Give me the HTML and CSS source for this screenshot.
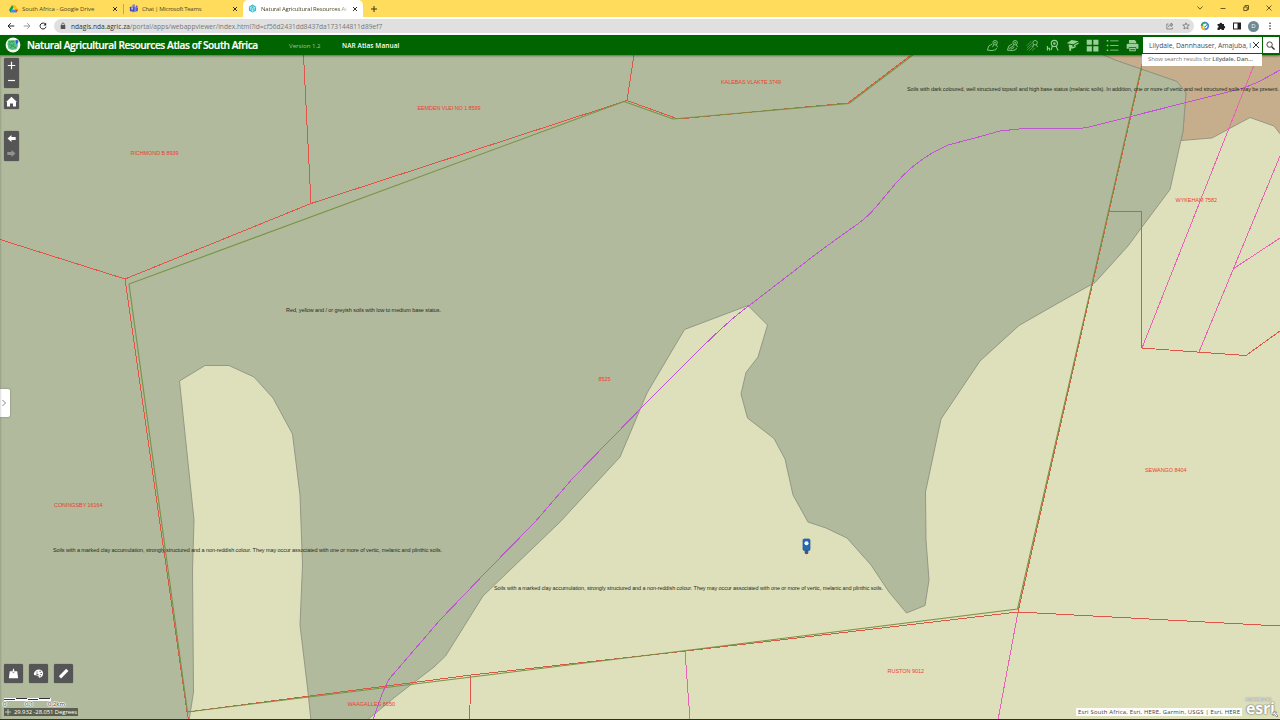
FILE: index.html
```html
<!DOCTYPE html>
<html lang="en">
<head>
<meta charset="utf-8">
<title>Natural Agricultural Resources Atlas of South Africa</title>
<link rel="stylesheet" href="styles.css">
</head>
<body>
<div class="window">
  <div class="tabs">
    <div class="tab drive">
      <svg class="fav" viewBox="0 0 10 10"><path d="M3.4 1H6.6L10 6.5H6.8z" fill="#fbbc05"/><path d="M3.4 1L0 6.8 1.7 9.5 5 4z" fill="#0f9d58"/><path d="M3.3 6.5H10L8.4 9.5H1.7z" fill="#4285f4"/><path d="M7 6.5H10L8.4 9.5z" fill="#ea4335"/></svg>
      <span class="tab-title">South Africa - Google Drive</span>
      <svg class="x" viewBox="0 0 6 6"><path d="M1 1L5 5M5 1L1 5"/></svg>
    </div>
    <div class="tab teams">
      <svg class="fav" viewBox="0 0 10 10"><circle cx="5.2" cy="2" r="1.6" fill="#7b83eb"/><circle cx="8.5" cy="2.8" r="1.1" fill="#5059c9"/><path d="M6 4h4v3q-1 2-3 1z" fill="#5059c9"/><path d="M3 4h5v3.500q-2 3-5 1z" fill="#7b83eb"/><rect x="1" y="3" width="5" height="5" rx=".6" fill="#4349a8"/><path d="M2.300 4.400h2.400M3.500 4.400v2.500" stroke="#fff" stroke-width=".8"/></svg>
      <span class="tab-title">Chat | Microsoft Teams</span>
      <svg class="x" viewBox="0 0 6 6"><path d="M1 1L5 5M5 1L1 5"/></svg>
    </div>
    <div class="tab active">
      <svg class="fav" viewBox="0 0 10 10"><path d="M5 .6L9 2.800V7.200L5 9.400 1 7.200V2.800z" fill="#2bb9cf"/><path d="M5 2.500L7.200 3.700V6.200L5 7.500 2.800 6.200V3.700zM1 2.800L5 5 9 2.800M5 5V9" fill="none" stroke="#d8f6fa" stroke-width=".7"/></svg>
      <span class="tab-title fade">Natural Agricultural Resources At</span>
      <svg class="x" viewBox="0 0 6 6"><path d="M1 1L5 5M5 1L1 5"/></svg>
    </div>
    <svg class="newtab" viewBox="0 0 8 8"><path d="M4 1V7M1 4H7"/></svg>
    <div class="winctl">
      <svg viewBox="0 0 8 8"><path d="M1.500 2.500L4 5.200 6.500 2.500"/></svg>
      <svg viewBox="0 0 8 8"><path d="M1.500 4.500H6.500"/></svg>
      <svg viewBox="0 0 8 8"><path d="M1.800 3H5.200V6.500H1.800zM3 3V1.500H6.500V5.500H5.200"/></svg>
      <svg viewBox="0 0 8 8"><path d="M1.500 1.500L6.500 6.500M6.500 1.500L1.500 6.500"/></svg>
    </div>
  </div>

  <div class="urlbar">
    <svg class="nav" viewBox="0 0 8 8"><path d="M7.300 4H1M3.800 1.200L1 4 3.800 6.800"/></svg>
    <svg class="nav off" viewBox="0 0 8 8"><path d="M.7 4H7M4.200 1.200L7 4 4.200 6.800"/></svg>
    <svg class="nav" viewBox="0 0 8 8"><path d="M6.600 2.400A3 3 0 1 0 7 4.700"/><path d="M7.200 .6V3.400H4.400z" fill="#222" stroke="none"/></svg>
    <div class="address">
      <svg class="lock" viewBox="0 0 6 8"><rect x=".7" y="3" width="4.600" height="4" rx=".5" fill="#555"/><path d="M1.700 3.200V2.300a1.300 1.300 0 0 1 2.600 0V3.200" fill="none" stroke="#555" stroke-width=".8"/></svg>
      <span class="url"><b>ndagis.nda.agric.za</b>/portal/apps/webappviewer/index.html?id=cf56d2431dd8437da173144811d89ef7</span>
      <svg class="act" viewBox="0 0 8 8"><path d="M2.500 2H.8V7H6.400V5.500M2.300 5Q2.700 2.600 5.500 2.700M5 1L7 2.700 5 4.500V1z"/></svg>
      <svg class="act" viewBox="0 0 8 8"><path d="M4 .8L5 3H7.300L5.500 4.600 6.100 7 4 5.700 1.900 7 2.500 4.600 .7 3H3z"/></svg>
    </div>
    <div class="exts">
      <svg viewBox="0 0 10 10"><circle cx="5" cy="5" r="3.300" fill="#fff" stroke="#4285f4" stroke-width="1.700"/><path d="M5 1.700A3.300 3.300 0 0 0 1.700 5" fill="none" stroke="#34a853" stroke-width="1.700"/><path d="M1.700 5A3.300 3.300 0 0 0 5 8.300" fill="none" stroke="#f6b90c" stroke-width="1.700"/><path d="M3.500 5L4.800 6.200 7.500 3" fill="none" stroke="#1a9a50"/></svg>
      <svg viewBox="0 0 10 10"><path d="M1.500 3H3.500a1.300 1.300 0 1 1 2.600 0H8V5a1.200 1.200 0 0 1 0 2.400V9H5.800a1.100 1.100 0 0 0-2.200 0H1.500V6.800a1.100 1.100 0 0 0 0-2.200z" fill="#222"/></svg>
      <svg viewBox="0 0 10 10"><rect x="1.500" y="2" width="7" height="6" fill="none" stroke="#222"/><rect x="5.500" y="2" width="3" height="6" fill="#222"/></svg>
      <span class="avatar">D</span>
      <svg viewBox="0 0 10 10" fill="#222"><circle cx="5" cy="2.200" r=".8"/><circle cx="5" cy="5" r=".8"/><circle cx="5" cy="7.800" r=".8"/></svg>
    </div>
  </div>

  <header class="header">
    <svg class="logo" viewBox="0 0 16 16"><circle cx="8" cy="8" r="7.400" fill="#f3f8f3"/><path d="M3.200 3.400L9.500 3 10.500 6.500 13 8.500 11.500 12.200 7 13 3.500 11.500 2.500 7.500z" fill="#55bd7b"/><path d="M4 5L9 4.500M4 7L8 9 11 11M5 11L9 7" stroke="#279653" stroke-width=".8" fill="none"/><path d="M10.300 3.200Q12.500 2 13.500 4.500L12 8.300 10.500 6z" fill="#2866d8"/></svg>
    <h1>Natural Agricultural Resources Atlas of South Africa</h1>
    <span class="version">Version 1.2</span>
    <span class="manual">NAR Atlas Manual</span>
    <nav class="tools">
      <span><svg viewBox="0 0 14 14"><path d="M1.500 12L3 7.500 6.500 5.500M1.500 12L6.500 12.500 10.500 11.500 11.500 9.500"/><circle cx="9.800" cy="4" r="2.400"/><circle cx="9.800" cy="4" r=".6"/><path d="M8.300 6L7 8.800M11 6L12.500 8.800"/></svg></span>
      <span><svg viewBox="0 0 14 14"><path d="M1.500 12L3 7.500 6.500 5.500M1.500 12L6.500 12.500 10.500 11.500 11.500 9.500M3 10.500L7 8M5 11L9 9"/><circle cx="9.800" cy="4" r="2.400"/><circle cx="9.800" cy="4" r=".6"/><path d="M8.300 6L7 8.800M11 6L12.500 8.800"/></svg></span>
      <span><svg class="dim" viewBox="0 0 14 14"><path d="M1 7L6 2M1 9.500L6.500 4.500M1 12L7 6.500M3.500 12.500L8.500 8M6.500 12.500L10 9.500"/><g class="pin"><circle cx="9.800" cy="4" r="2.400"/><path d="M8.300 6L7 8.800M11 6L12.500 8.800"/></g></svg></span>
      <span><svg viewBox="0 0 14 14" class="mid"><circle cx="9" cy="4.800" r="3.300"/><circle cx="9" cy="4.800" r=".8"/><path d="M7 7.300L5.500 12M10.800 7.500L13 12.300M1.500 7.500V12.500M1.500 10H3.800V12.500"/></svg></span>
      <span><svg viewBox="0 0 14 14" class="solid"><path d="M.8 4.500L6 1 13.500 2.300 8 5.700zM8.500 6.500L13.500 3.500V5L8.500 8zM3 5.800L7 6.800V8.500L10.500 7.500V9L6.500 10.500 3 9z"/><path d="M3.500 8.800H5.500V13.500L4.500 12.500 3.500 13z"/></svg></span>
      <span><svg viewBox="0 0 14 14" class="solid"><path d="M.8 .8H6.300V6.300H.8zM7.900 .8H13.400V6.300H7.900zM.8 7.900H6.300V13.400H.8zM7.900 7.900H13.400V13.400H7.900z"/></svg></span>
      <span><svg viewBox="0 0 14 14"><path d="M4.500 2H13.500M4.500 7H13.500M4.500 12H13.500"/><path d="M.8 2H2.500M.8 7H2.500M.8 12H2.500" stroke-width="1.600"/></svg></span>
      <span><svg viewBox="0 0 14 14" class="solid"><path d="M3.200 1H9.300L11 2.700V4.500H3.200z"/><path fill-rule="evenodd" d="M2 5H12.200Q13.400 5 13.400 6.200V10.500H11V9H3V10.500H.7V6.200Q.7 5 2 5zM3.500 9.800H10.500V13.300H3.500zM4.500 11H9.500V12H4.500z"/></svg></span>
    </nav>
    <div class="search">
      <div class="field"><span class="query">Lilydale, Dannhauser, Amajuba, I</span><svg class="clear" viewBox="0 0 8 8"><path d="M1 1L7 7M7 1L1 7"/></svg></div>
      <span class="go"><svg viewBox="0 0 10 10"><circle cx="4" cy="4" r="3"/><path d="M6.300 6.300L9.500 9.500" stroke-width="1.600"/></svg></span>
      <div class="suggest">Show search results for <b>Lilydale, Dan…</b></div>
    </div>
  </header>

  <main class="map">
    <svg class="canvas" viewBox="0 55 1280 664">
      <g class="soil">
        <path class="melanic" d="M1101 54L1115 60 1177 81.500 1186 93 1183 131 1181 140.500 1212 138 1250 117.500 1274 126 1281 135V54z"/>
        <path class="base" d="M-2 54H1101L1115 60 1177 81.500 1186 93 1183 131 1181 140 1170 189.500 1142 227 1128 246 1095 282.500 1060 302 1019 325.500 980 361 941 419 925.500 492 926 540 929 580 925 605.500 906.500 613 889 592 871 565 847 538 826 528 808 522 793 495 785 459 774 438.500 747.500 418 741 394 746 372.500 758 357 767.500 325 748 305.500 684.500 329.500 647 393 620 457 560 522 483 596 445.500 656 434 667 395 697 366 721H306.500L310.800 719 308 692 300 625 302.500 565 300 495 292.500 434 273 398 254 377 229 365.500H205L179.500 381 194 520 192.500 570 193.500 692 189 721H-2z"/>
      </g>
      <g class="farm">
        <path d="M0 239.500L125 279 311 203.500 627 100.500 678 119 848 103 911 55M303.500 55L311 203.500M634 55L627 100.500M125 279L187 712 188.500 720M187 712L471 675 686 651 1018 612 1280 626M1018 612L1109 211.500H1141.500V348L1246 355.500 1280 331M1109 211.500L1142 67M471 675L469.500 720"/>
      </g>
      <path class="portion" d="M1254 65L1142 348M1280 156L1199 352M1233 269L1280 238M685 651L690 720M1018 612L998 720"/>
      <path class="boundary" d="M913 55L849 103.500 673 119 624 101.500 129 284 187.500 712 686 650.500 1017.500 609 1093 279 1142 64"/>
      <path class="river" d="M1280 70L1262 80Q1250 86 1240 89L1089 127Q1083 128.500 1074 128.500H1024L1000 131 975 138 948 145 932 153Q912 165 896 183L876 207Q866 219 852 228L820 251 748 306.500Q730 319 690 359L650 399 630 419.500 573 478 535 522 487 571 440 620 390 678Q384 686 373 720"/>
      <g class="names">
        <text x="130.500" y="155.300" textLength="48">RICHMOND B 8939</text>
        <text x="417.500" y="110.300" textLength="63">EEMDEN VLEI NO 1 8599</text>
        <text x="721" y="83.600" textLength="60">KALEBAS VLAKTE 3749</text>
        <text x="1175.500" y="202.200" textLength="41.500">WYKEHAM 7582</text>
        <text x="598.500" y="380.700" textLength="12">8525</text>
        <text x="1145" y="472.300" textLength="41.500">SEWANGO 8404</text>
        <text x="54" y="507" textLength="48.500">CONINGSBY 16164</text>
        <text x="887.500" y="672.700" textLength="36.500">RUSTON 9012</text>
        <text x="347.500" y="705.700" textLength="47.500">WAAGALLES 8650</text>
      </g>
      <g class="notes">
        <text x="907" y="91.200" textLength="372">Soils with dark coloured, well structured topsoil and high base status (melanic soils). In addition, one or more of vertic and red structured soils may be present.</text>
        <text x="286" y="312.200" textLength="155">Red, yellow and / or greyish soils with low to medium base status.</text>
        <text x="53" y="552.200" textLength="389">Soils with a marked clay accumulation, strongly structured and a non-reddish colour. They may occur associated with one or more of vertic, melanic and plinthic soils.</text>
        <text x="494" y="590.200" textLength="389">Soils with a marked clay accumulation, strongly structured and a non-reddish colour. They may occur associated with one or more of vertic, melanic and plinthic soils.</text>
      </g>
      <g><ellipse cx="806.500" cy="552" rx="2" ry="2.200" fill="#555"/><rect x="803" y="539" width="7" height="11.500" rx="1.300" fill="#2869b8" stroke="#1e549b" stroke-width=".7"/><circle cx="806.500" cy="543.300" r="2" fill="#fff"/></g>
    </svg>

    <div class="controls">
      <div class="group"><svg viewBox="0 0 15 15"><path d="M7.500 3.800V11.200M3.800 7.500H11.200"/></svg><svg viewBox="0 0 15 15"><path d="M4 7.500H11"/></svg></div>
      <div class="group home"><svg viewBox="0 0 15 15"><path d="M2 8L7.500 2.800 13 8H12V12.500H9V9.500H6V12.500H3V8z" fill="#fff" stroke="none"/></svg></div>
      <div class="group"><svg viewBox="0 0 15 15"><path d="M3.500 7.500L7.500 4V6H11.700V9H7.500V11z" fill="#fff" stroke="none"/></svg><svg viewBox="0 0 15 15"><path d="M11.500 7.500L7.500 4V6H3.300V9H7.500V11z" fill="#929292" stroke="none"/></svg></div>
    </div>
    <div class="drawer"><svg viewBox="0 0 6 10"><path d="M1.500 2L4.500 5 1.500 8"/></svg></div>
    <div class="bottom-left">
      <div class="widgets">
        <span><svg viewBox="0 0 14 14"><path d="M3 4.500H5.200L7 7 8.800 4.500H11L12 12H2z"/><path d="M6.400 2H7.600V4H9L7 6.200 5 4H6.400z"/></svg></span>
        <span><svg viewBox="0 0 14 14"><path d="M2 7Q3.500 2.500 8 2.700 11.700 3.200 12 7 11.500 11 8 11.500 6.500 11 7 9.500L2.200 8.500z"/><path d="M4.800 5.500H6M8 4.500H9.500M9.200 7H10.700M8.300 9.500H9.600M4.500 7.500L7 8" stroke="#555" stroke-width="1.100"/></svg></span>
        <span><svg viewBox="0 0 14 14"><path d="M2 9.900L9.900 2 12.300 4.400 4.400 12.300z"/></svg></span>
      </div>
      <div class="scalebar"><div class="bar"><i></i><i></i><i></i><i></i></div><div class="ticks"><span>0</span><span>0.1</span><span>0.2km</span></div></div>
      <div class="coords"><svg viewBox="0 0 8 8"><path d="M4 1V7M1 4H7"/></svg><span>29.932 -28.051 Degrees</span></div>
    </div>
    <div class="bottom-right">
      <span class="credits">Esri South Africa, Esri, HERE, Garmin, USGS | Esri, HERE</span>
      <span class="esri"><small>POWERED BY</small><b>esri</b><svg viewBox="0 0 7 7"><path d="M1 1H4.500L3.600 2.300 6 5 5 6 2.300 3.500 1 4.500z"/></svg></span>
    </div>
  </main>
</div>
</body>
</html>
```
FILE: styles.css
```css
* { box-sizing: border-box; }
body { margin: 0; font-family: "Open Sans", "Noto Sans", sans-serif; }
svg { display: block; flex: none; }
.window { width: 1280px; height: 720px; overflow: hidden; display: flex; flex-direction: column; background: #2b302b; }

/* Browser chrome */
.tabs { height: 17px; background: #ffdc5c; display: flex; align-items: center; font-size: 6px; color: #4e4626; }
.tab { height: 17px; display: flex; align-items: center; padding-right: 5px; white-space: nowrap; letter-spacing: -.1px; }
.drive { width: 124px; padding-left: 9px; border-right: 1px solid #bda654; height: 10px; }
.teams { width: 119px; padding-left: 5px; letter-spacing: -.3px; }
.active { width: 120px; padding-left: 5px; background: #fff; border-radius: 5px 5px 0 0; }
.fav { width: 9px; height: 9px; margin-right: 4px; }
.tab-title { flex: 1; }
.fade { letter-spacing: -.2px; -webkit-mask-image: linear-gradient(90deg, #000 88%, transparent); mask-image: linear-gradient(90deg, #000 88%, transparent); margin-right: 3px; }
.x { width: 6px; height: 6px; stroke: #333; stroke-width: 1; }
.newtab { width: 8px; height: 8px; margin-left: 7px; stroke: #3c3512; stroke-width: 1; }
.winctl { margin: -2px 7px 0 auto; display: flex; gap: 15px; }
.winctl svg { width: 8px; height: 8px; fill: none; stroke: #5b4c16; stroke-width: .9; }

.urlbar { height: 18px; background: #fff; display: flex; align-items: center; padding-left: 7px; }
.nav { width: 8px; height: 8px; margin-right: 8px; fill: none; stroke: #222; stroke-width: 1; }
.off { stroke: #999; }
.address { width: 1140px; height: 14px; border-radius: 7px; background: #e0e0e0; display: flex; align-items: center; padding: 0 4px 0 6px; margin-left: -1px; }
.lock { width: 6px; height: 8px; margin-right: 5px; }
.url { flex: 1; font-size: 6.6px; color: #777; letter-spacing: .02px; white-space: nowrap; }
.url b { color: #333; font-weight: 400; }
.act { width: 8px; height: 8px; margin-left: 8px; fill: none; stroke: #666; stroke-width: .7; }
.exts { display: flex; align-items: center; gap: 6px; margin-left: 6px; }
.exts svg { width: 10px; height: 10px; }
.avatar { width: 11px; height: 11px; border-radius: 50%; background: #6f8995; color: #fff; font-size: 6px; line-height: 11px; text-align: center; }

/* Application header */
.header { height: 20px; background: #006400; color: #fff; display: flex; align-items: center; padding-left: 5px; position: relative; z-index: 2; box-shadow: 0 1px 2px rgba(0,0,0,.45); }
.logo { width: 16px; height: 16px; margin-right: 6px; }
h1 { margin: 0; width: 262px; font: 600 10.2px "Open Sans", sans-serif; letter-spacing: -.43px; white-space: nowrap; -webkit-text-stroke: .2px #fff; }
.version { width: 53px; font-size: 6.1px; color: #a0c5a0; }
.manual { font-size: 6.5px; font-weight: 600; letter-spacing: .08px; }
.tools { margin-left: auto; display: flex; }
.tools span { width: 20px; height: 20px; display: flex; align-items: center; justify-content: center; border-left: 1px solid #0a5b0e; }
.tools svg { width: 13px; height: 13px; fill: none; stroke: #96cf96; stroke-width: .9; }
.tools .dim { stroke: #5c9e5c; }
.tools .pin { stroke: #96cf96; }
.tools .mid { stroke-width: 1.200; }
.tools .solid { fill: #9acf9a; stroke: none; }
.search { width: 138px; height: 16px; display: flex; position: relative; gap: 1px; padding-left: 1px; }
.field { width: 119px; height: 16px; background: #fff; display: flex; align-items: center; padding-left: 6px; }
.query { width: 102px; white-space: nowrap; font: 6.8px "Open Sans", sans-serif; letter-spacing: -.04px; color: #3e5164; }
.clear { width: 8px; height: 8px; stroke: #333; stroke-width: 1; margin-left: 1px; }
.go { width: 15.500px; height: 16px; background: #fff; display: flex; align-items: center; justify-content: center; }
.go svg { width: 9px; height: 9px; fill: none; stroke: #333; }
.suggest { position: absolute; left: 0; top: 17px; width: 120px; height: 12px; padding-left: 6px; background: #fff; color: #777; font-size: 6px; letter-spacing: -.11px; line-height: 11px; white-space: nowrap; }
.suggest b { font-weight: 600; color: #666; }

/* Map */
.map { width: 1280px; height: 664px; position: relative; background: #dee0bb; }
.map::before { content: ""; position: absolute; z-index: 1; left: 0; top: 0; bottom: 0; width: 2px; background: linear-gradient(90deg, rgba(0,0,0,.14), transparent); }
.canvas { width: 1280px; height: 664px; }
.soil { stroke: #8e9280; stroke-width: .9; }
.base { fill: #b1ba9c; }
.melanic { fill: #c6ae8d; }
.farm, .portion, .river, .boundary { fill: none; stroke-width: 1; }
.farm, .portion, .river { shape-rendering: crispEdges; }
.farm { stroke: #dd5647; }
.portion { stroke: #e663b5; }
.boundary { stroke: #789344; stroke-width: 1.100; }
.river { stroke: #bd56d0; }
.names text, .notes text { font-family: "Liberation Sans", Arial, sans-serif; font-size: 5.500px; }
.names { fill: #ee3d32; }
.notes { fill: #282b23; }

.controls { position: absolute; left: 4px; top: 3px; display: flex; flex-direction: column; }
.group { width: 15px; border-radius: 1.500px; background: #555; box-shadow: 0 0 1px #444; }
.group svg { width: 15px; height: 15px; stroke: #fff; stroke-width: 1.200; fill: none; }
.home { margin: 5.500px 0 22px; }
.drawer { position: absolute; left: 0; top: 333.500px; width: 10px; height: 28px; background: #fff; border-radius: 0 2px 2px 0; box-shadow: 0 0 2px #777; display: flex; align-items: center; padding-left: 1px; }
.drawer svg { width: 6px; height: 10px; fill: none; stroke: #777; stroke-width: .9; }
.bottom-left { position: absolute; left: 4px; bottom: 3px; display: flex; flex-direction: column; }
.widgets { display: flex; gap: 6px; margin-bottom: 15px; }
.widgets span { width: 19px; height: 19px; border-radius: 1.500px; background: #555; box-shadow: 0 0 1px #444; display: flex; align-items: center; justify-content: center; }
.widgets svg { width: 13px; height: 13px; fill: #fff; }
.scalebar { height: 10px; font-size: 5.900px; line-height: 7px; color: #444; }
.bar { width: 47px; height: 3px; display: flex; background: #fff; }
.bar i { flex: 1; height: 1px; margin-top: 1px; background: #333; border-right: 1px solid #fff; }
.bar i:nth-child(even) { margin-top: 0; }
.ticks { display: flex; margin-left: -1px; text-shadow: 1px 0 #fff, -1px 0 #fff, 0 1px #fff, 0 -1px #fff; }
.ticks span { width: 22px; }
.ticks span:last-child { margin-left: 1px; }
.coords { width: 74px; height: 8px; background: #59604f; color: #fff; font-size: 5.900px; line-height: 8px; letter-spacing: -.06px; display: flex; white-space: nowrap; }
.coords svg { width: 8px; height: 8px; margin-right: 2px; stroke: #fff; stroke-width: .6; }
.bottom-right { position: absolute; right: 1px; bottom: 1px; display: flex; align-items: flex-end; gap: 4px; }
.credits { width: 166px; height: 8px; margin-bottom: 2px; padding-left: 2px; background: rgba(255,255,255,.9); font-size: 5.900px; letter-spacing: .2px; line-height: 8px; color: #444; white-space: nowrap; }
.esri { width: 33px; height: 21px; display: flex; flex-direction: column; position: relative; color: #fff; text-shadow: 0 0 1px #555, 0 0 2px #777; }
.esri small { font-size: 3.800px; line-height: 5px; font-weight: 600; letter-spacing: .1px; }
.esri b { font: 700 16px/15px "Open Sans", sans-serif; letter-spacing: -.2px; margin-top: -1px; }
.esri svg { position: absolute; right: 0; bottom: 0; width: 7px; height: 7px; fill: #fff; stroke: #555; stroke-width: .6; }
```
